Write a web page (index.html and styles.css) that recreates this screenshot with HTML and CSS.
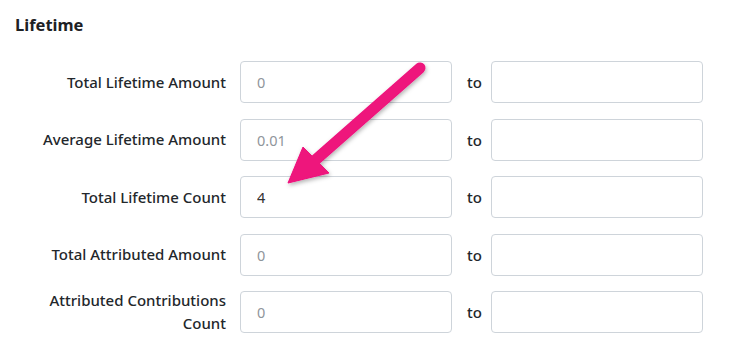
FILE: index.html
```html
<!DOCTYPE html>
<html>
<head>
<meta charset="utf-8">
<link rel="stylesheet" href="styles.css">
</head>
<body>
<div class="page">
  <h3 class="title">Lifetime</h3>
  <div class="grid">
    <label class="lbl">Total Lifetime Amount</label>
    <div class="field"><input class="inp" placeholder="0"></div>
    <span class="to">to</span>
    <div class="field"><input class="inp"></div>

    <label class="lbl">Average Lifetime Amount</label>
    <div class="field"><input class="inp" placeholder="0.01"></div>
    <span class="to">to</span>
    <div class="field"><input class="inp"></div>

    <label class="lbl">Total Lifetime Count</label>
    <div class="field"><input class="inp" value="4"></div>
    <span class="to">to</span>
    <div class="field"><input class="inp"></div>

    <label class="lbl">Total Attributed Amount</label>
    <div class="field"><input class="inp" placeholder="0"></div>
    <span class="to">to</span>
    <div class="field"><input class="inp"></div>

    <label class="lbl">Attributed Contributions<br>Count</label>
    <div class="field"><input class="inp" placeholder="0"></div>
    <span class="to">to</span>
    <div class="field"><input class="inp"></div>
  </div>
</div>
<svg class="arrow" width="748" height="356" viewBox="0 0 748 356">
  <defs>
    <filter id="sh" x="-20%" y="-20%" width="140%" height="140%">
      <feDropShadow dx="1" dy="2" stdDeviation="2" flood-color="#000" flood-opacity="0.3"/>
    </filter>
  </defs>
  <g filter="url(#sh)" fill="#ee127c" stroke="#ee127c">
    <line x1="420" y1="68" x2="312" y2="163" stroke-width="11" stroke-linecap="round"/>
    <polygon points="288,183 303,147 329,173" stroke-width="1" stroke-linejoin="round"/>
  </g>
</svg>
</body>
</html>
```
FILE: styles.css
```css
html, body {
  margin: 0;
  padding: 0;
  background: #fff;
}
body {
  width: 748px;
  height: 356px;
  overflow: hidden;
  position: relative;
  font-family: "Noto Sans", "Open Sans", sans-serif;
  color: #212529;
}
.page {
  padding: 13px 0 0 15px;
}
.title {
  margin: 0;
  font-size: 16.5px;
  font-weight: 700;
  line-height: 24px;
  color: #1d2124;
}
.grid {
  margin-top: 24px;
  display: grid;
  grid-template-columns: 225px 212px max-content 212px;
  grid-auto-rows: 42px;
  justify-content: start;
  row-gap: 15.5px;
  align-items: center;
}
.lbl {
  text-align: right;
  padding-right: 14px;
  font-size: 15px;
  font-weight: 500;
  line-height: 23px;
  color: #23272b;
}
.to {
  padding: 0 9px 0 15px;
  font-size: 15px;
  font-weight: 500;
  color: #23272b;
}
.field {
  display: flex;
}
.inp {
  box-sizing: border-box;
  width: 212px;
  height: 42px;
  border: 1px solid #ced4da;
  border-radius: 4px;
  padding: 0 16px;
  font-family: "Noto Sans", "Open Sans", sans-serif;
  font-size: 14.5px;
  color: #333;
  background: #fff;
  outline: none;
}
.inp::placeholder {
  color: #8f959b;
}
.arrow {
  position: absolute;
  top: 0;
  left: 0;
  pointer-events: none;
}
```
